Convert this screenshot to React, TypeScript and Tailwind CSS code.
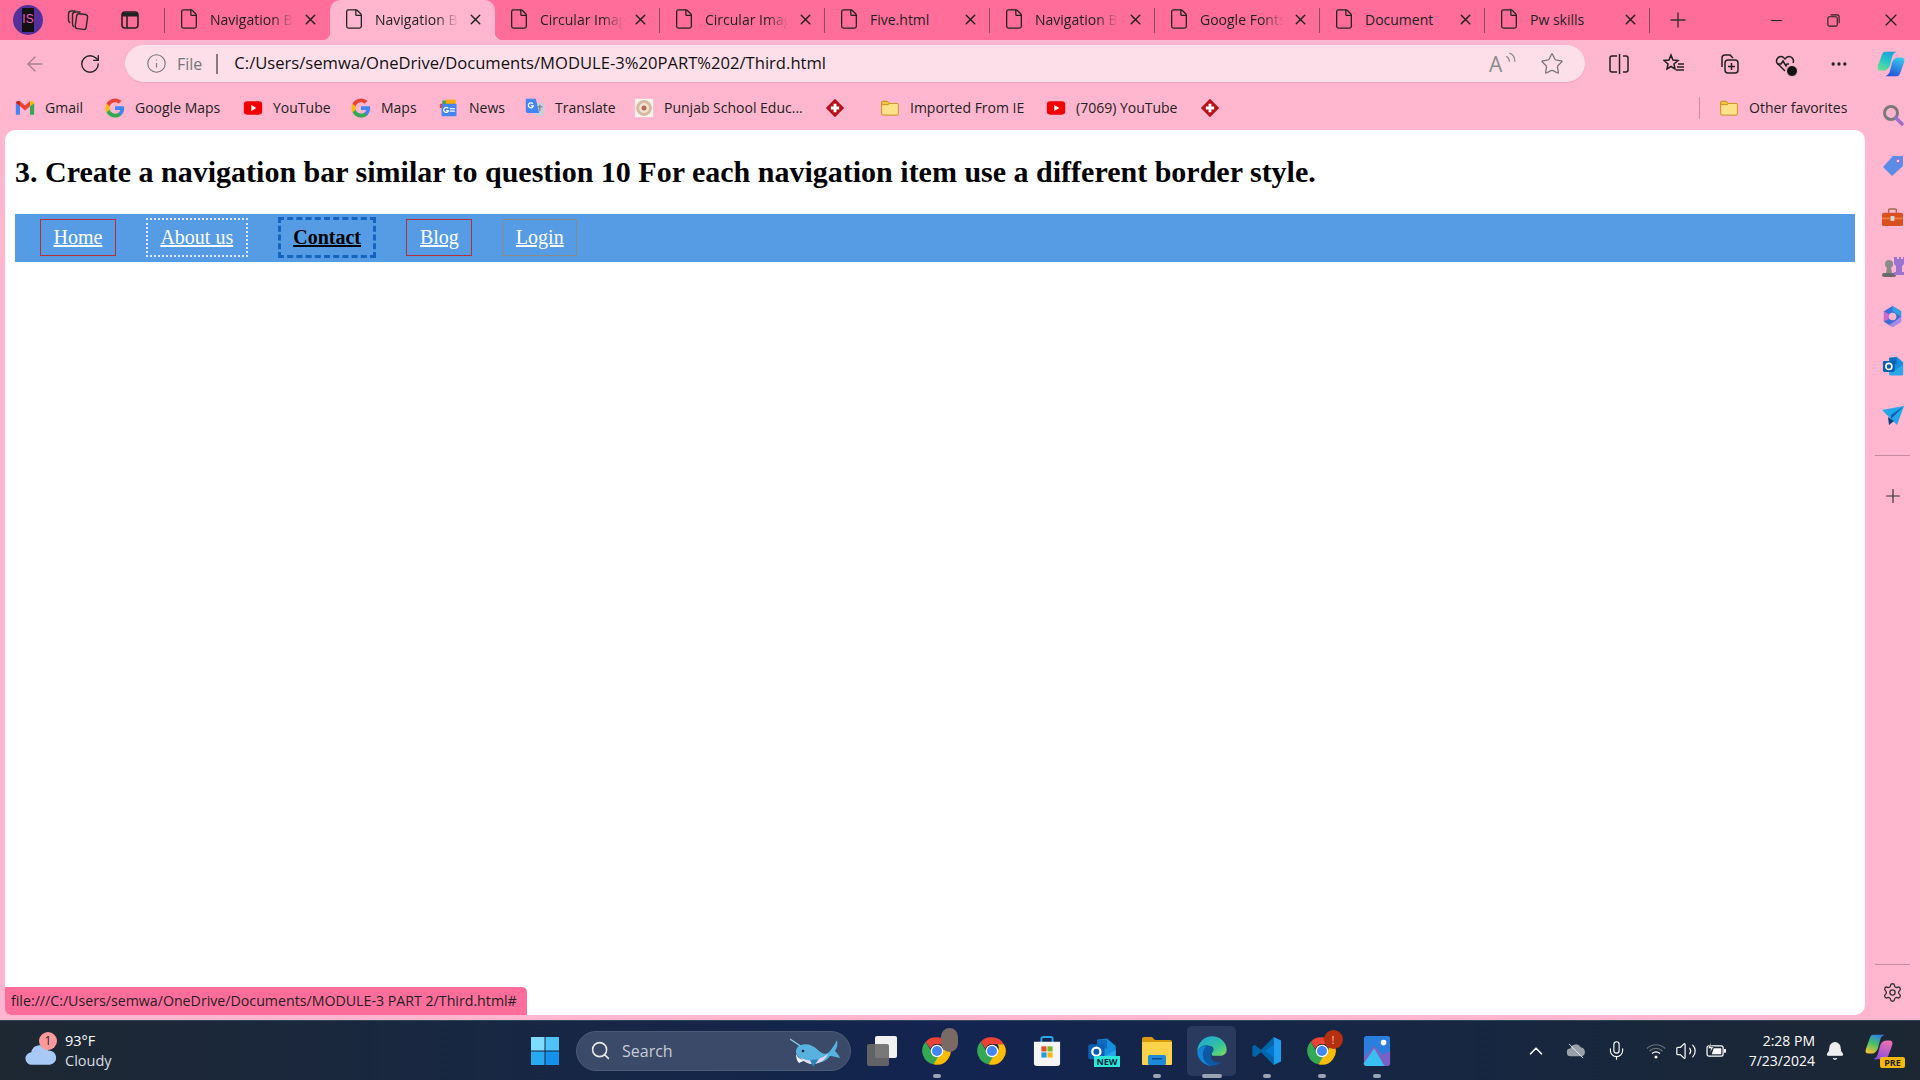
import {
  ArrowLeft,
  Bell,
  ChevronUp,
  Ellipsis,
  File,
  Info,
  Mic,
  Minus,
  Plus,
  RotateCw,
  Search,
  Settings,
  Star,
  Volume2,
  X,
} from "lucide-react";

const ui = "font-['Open_Sans','Noto_Sans',sans-serif]";

const tabs = [
  "Navigation Bar",
  "Navigation Bar",
  "Circular Image",
  "Circular Image",
  "Five.html",
  "Navigation Bar",
  "Google Fonts",
  "Document",
  "Pw skills",
];

const GoogleG = () => (
  <svg viewBox="0 0 24 24" className="w-5 h-5">
    <path fill="#4285F4" d="M23 12.3c0-.8-.1-1.6-.2-2.3H12v4.4h6.2c-.3 1.4-1.1 2.6-2.3 3.4v2.8h3.7c2.2-2 3.4-5 3.4-8.3z" />
    <path fill="#34A853" d="M12 23.5c3.1 0 5.700-1 7.600-2.800l-3.700-2.900c-1 .7-2.300 1.100-3.900 1.100-3 0-5.500-2-6.400-4.700H1.800v3C3.700 21 7.600 23.5 12 23.5z" />
    <path fill="#FBBC05" d="M5.600 14.200c-.5-1.400-.5-3 0-4.400v-3H1.800c-1.600 3.200-1.600 7.200 0 10.400l3.800-3z" />
    <path fill="#EA4335" d="M12 5.100c1.700 0 3.200.6 4.400 1.700l3.300-3.300C17.700 1.600 15.100.5 12 .5 7.600.5 3.700 3 1.800 6.800l3.800 3C6.500 7.100 9 5.100 12 5.100z" />
  </svg>
);

const Gmail = () => (
  <svg viewBox="0 0 24 24" className="w-5 h-5">
    <path fill="#4285F4" d="M1 6v14h5V10z" />
    <path fill="#34A853" d="M18 10v10h5V6z" />
    <path fill="#EA4335" d="M6 10V4l6 5 6-5v6l-6 5z" />
    <path fill="#C5221F" d="M1 6c0-2 2.5-3.200 5-2v6z" />
    <path fill="#FBBC05" d="M23 6c0-2-2.5-3.200-5-2v6z" />
  </svg>
);

const YouTube = () => (
  <svg viewBox="0 0 24 24" className="w-5 h-5">
    <rect x="1" y="4" width="22" height="16" rx="4" fill="#f00000" />
    <path d="M10 8.5l6 3.500-6 3.500z" fill="#fff" />
  </svg>
);

const News = () => (
  <svg viewBox="0 0 24 24" className="w-5 h-5">
    <path fill="#34A853" d="M4 3h12v6H4z" />
    <path fill="#F9AB00" d="M8 2h12v7H8z" />
    <path fill="#EA4335" d="M1 7h8v5H1z" />
    <rect x="3" y="7" width="18" height="15" rx="1.5" fill="#4285F4" />
    <rect x="13" y="12" width="6" height="1.5" fill="#fff" />
    <rect x="13" y="15" width="6" height="1.5" fill="#fff" />
    <path fill="none" stroke="#fff" strokeWidth="1.5" d="M11 12.500a3 3 0 1 0 .5 2.500H8.500" />
  </svg>
);

const Translate = () => (
  <svg viewBox="0 0 24 24" className="w-5 h-5">
    <path fill="#c9ced6" d="M10 6h13v15H12z" />
    <path fill="#7c8794" d="M14 10h7v1.500h-7zM17 8h1.500v8H17z" />
    <path fill="#4285F4" d="M1 1h12l4 17H3a2 2 0 0 1-2-2z" />
    <path fill="none" stroke="#fff" strokeWidth="1.5" d="M9.500 7a3 3 0 1 0 .5 2.500H7" />
  </svg>
);

const Crest = () => (
  <svg viewBox="0 0 24 24" className="w-5 h-5">
    <rect x="1" y="1" width="22" height="22" fill="#f7f3ee" />
    <circle cx="12" cy="12" r="9.5" fill="#d9b8a0" />
    <circle cx="12" cy="12" r="6" fill="#f1e3d4" />
    <circle cx="12" cy="12" r="3" fill="#b06a55" />
  </svg>
);

const RedDiamond = () => (
  <svg viewBox="0 0 24 24" className="w-5 h-5">
    <path d="M12 1l11 11-11 11L1 12z" fill="#b5121b" />
    <path d="M10.300 7h3.400v3.300H17v3.400h-3.300V17h-3.400v-3.300H7v-3.400h3.300z" fill="#fff" />
  </svg>
);

const FolderIcon = () => (
  <svg viewBox="0 0 24 24" className="w-5 h-5">
    <path d="M2 5.500A1.500 1.500 0 0 1 3.500 4h5l2.500 2.500h9.500A1.500 1.500 0 0 1 22 8v11a1.500 1.500 0 0 1-1.500 1.500h-17A1.500 1.500 0 0 1 2 19z" fill="#fde28a" stroke="#c7941e" strokeWidth="1.2" />
    <path d="M2 8h8l1-1.500L8.500 4h-5A1.500 1.500 0 0 0 2 5.500z" fill="#f4c542" stroke="#c7941e" strokeWidth="1.2" />
  </svg>
);

const Chrome = () => (
  <svg viewBox="0 0 48 48" className="w-[30px] h-[30px]">
    <path fill="#EA4335" d="M24 2a22 22 0 0 1 19 11H24a11 11 0 0 0-10.500 7.500L6 9A22 22 0 0 1 24 2z" />
    <path fill="#34A853" d="M6 9l9.500 16.500A11 11 0 0 0 27 34.500L18.500 45.300A22 22 0 0 1 6 9z" />
    <path fill="#FBBC05" d="M43 13a22 22 0 0 1-24.500 32.300L28 29a11 11 0 0 0 5-16z" />
    <circle cx="24" cy="24" r="10" fill="#fff" />
    <circle cx="24" cy="24" r="8" fill="#4285F4" />
  </svg>
);

const Edge = () => (
  <svg viewBox="0 0 48 48" className="w-[32px] h-[32px]">
    <defs>
      <linearGradient id="edgeTop" x1="0" y1="0" x2="1" y2="1">
        <stop offset="0" stopColor="#1aa4dc" />
        <stop offset="0.6" stopColor="#35c1a0" />
        <stop offset="1" stopColor="#7fe05a" />
      </linearGradient>
    </defs>
    <path fill="url(#edgeTop)" d="M24 2c12 0 22 9 22 20 0 6-5 9-10 9H25c-2-1-2-4 0-6 3-3 1-9-6-9C10 16 4 21 2 25 2 12 12 2 24 2z" />
    <path fill="#0c59a4" d="M2 25c3-7 10-11 17-9 6 1 8 6 6 9-5 5-3 13 5 16 3 1 7 1 9 0-4 3-9 5-15 5C12 46 2 36 2 25z" />
    <path fill="#1583d8" d="M2 25c3-6 9-9 14-8-6 5-7 13-4 20 2 4 6 8 12 9C12 46 2 36 2 25z" />
  </svg>
);

const VSCode = () => (
  <svg viewBox="0 0 24 24" className="w-[32px] h-[32px]">
    <path fill="#0065a9" d="M17 1.500L7.500 11 3 7.500 1 8.500v7l2 1L7.500 13l9.500 9.500z" />
    <path fill="#1f9cf0" d="M17 1.500l5.500 2.700v15.600L17 22.500z" />
    <path fill="#0078d4" d="M17 7.500L10.500 12l6.500 4.500z" />
  </svg>
);

const Whale = () => (
  <svg viewBox="0 0 50 29" className="w-[50px] h-[29px]">
    <path d="M0 1l12 8" stroke="#8fd0ee" strokeWidth="1.2" />
    <path fill="#58b2e0" d="M9 8c6-3 13-2 19 4 4 4 8 5 11 2 2-2 5-6 8-12 1 4 0 8-2 11 2 2 4 4 5 7-4-1-7-2-10-2-4 6-12 8-19 7-7-1-13-5-15-10-.5-3 1-6 3-7z" />
    <path fill="#e2d8f4" d="M11 20c8 4 18 3 27-4-3 7-11 11-18 10-4-1-7-3-9-6z" />
    <path fill="#f2f6fa" d="M6 16c2 4 5 6 9 6l-6 3c-2-2-3-5-3-9z" />
    <path fill="#2a86b8" d="M20 22l3 7 6-8z" />
    <circle cx="13" cy="13" r="1.3" fill="#10203a" />
  </svg>
);

const Store = () => (
  <svg viewBox="0 0 30 34" className="w-[28px] h-[32px]">
    <path d="M9 8V4a2 2 0 0 1 2-2h8a2 2 0 0 1 2 2v4" fill="none" stroke="#2ba4e8" strokeWidth="2" />
    <path d="M1 7h28v23a3 3 0 0 1-3 3H4a3 3 0 0 1-3-3z" fill="#f5f5f5" />
    <rect x="9" y="12" width="5.5" height="5.5" fill="#e8502a" />
    <rect x="15.5" y="12" width="5.5" height="5.5" fill="#78b82a" />
    <rect x="9" y="18.5" width="5.5" height="5.5" fill="#1f9ce8" />
    <rect x="15.5" y="18.5" width="5.5" height="5.5" fill="#f7b512" />
  </svg>
);

const Outlook = ({ small }: { small?: boolean }) => (
  <svg viewBox="0 0 24 24" className={small ? "w-[22px] h-[22px]" : "w-[30px] h-[30px]"}>
    <path fill="#1490df" d="M8 3l8-1 7 6v13a1 1 0 0 1-1 1H9a1 1 0 0 1-1-1z" />
    <path fill="#28a8ea" d="M8 12l7 4 8-5v10a1 1 0 0 1-1 1H9a1 1 0 0 1-1-1z" />
    <path fill="#0f6cbd" d="M8 3h8v7H8z" />
    <rect x="1" y="6.5" width="13" height="12" rx="1.5" fill="#0a5fb4" />
    <circle cx="7.5" cy="12.5" r="3.3" fill="none" stroke="#fff" strokeWidth="1.8" />
  </svg>
);

const Photos = () => (
  <svg viewBox="0 0 30 34" className="w-[28px] h-[32px]">
    <rect x="1" y="1" width="28" height="32" rx="3" fill="#2b7fdc" />
    <path d="M1 24L12 11l9 10 8-4v13a3 3 0 0 1-3 3H4a3 3 0 0 1-3-3z" fill="#7a5fc4" />
    <path d="M1 30L12 14l11 19H4a3 3 0 0 1-3-3z" fill="#39c0ee" />
    <circle cx="22" cy="8" r="3" fill="#fff" />
  </svg>
);

const WindowsLogo = () => (
  <svg viewBox="0 0 30 30" className="w-[30px] h-[30px]">
    <path fill="#7fdcff" d="M1 1h13.500v13.500H1z" />
    <path fill="#4fc3f7" d="M15.500 1H29v13.500H15.500z" />
    <path fill="#29a9f0" d="M1 15.500h13.500V29H1z" />
    <path fill="#1492ea" d="M15.500 15.500H29V29H15.500z" />
  </svg>
);

const CopilotMark = ({ pre }: { pre?: boolean }) => (
  <svg viewBox="0 0 32 32" className="w-[30px] h-[30px]">
    <defs>
      <linearGradient id={pre ? "cpL" : "cdL"} x1="0.7" y1="0" x2="0.3" y2="1">
        <stop offset="0" stopColor={pre ? "#2f7fe8" : "#1c9fe0"} />
        <stop offset="0.5" stopColor={pre ? "#46c06a" : "#27c4c8"} />
        <stop offset="1" stopColor={pre ? "#f2c230" : "#5fe08c"} />
      </linearGradient>
      <linearGradient id={pre ? "cpR" : "cdR"} x1="0.7" y1="0" x2="0.3" y2="1">
        <stop offset="0" stopColor={pre ? "#f070b0" : "#35c8f0"} />
        <stop offset="1" stopColor={pre ? "#8a4ee0" : "#2450d8"} />
      </linearGradient>
    </defs>
    <path fill={`url(#${pre ? "cpR" : "cdR"})`} d="M22 29H10c3-1 4-3 5-6l2-8c1-3 3-6 7-6h3c3 0 4 2 3 5l-4 11c-1 3-2 4-4 4z" />
    <path fill={`url(#${pre ? "cpL" : "cdL"})`} d="M10 3h12c-3 1-4 3-5 6l-2 8c-1 3-3 6-7 6H5c-3 0-4-2-3-5L6 7c1-3 2-4 4-4z" />
  </svg>
);

const bookmarks = [
  { icon: <Gmail />, label: "Gmail", w: "w-[90px]" },
  { icon: <GoogleG />, label: "Google Maps", w: "w-[138px]" },
  { icon: <YouTube />, label: "YouTube", w: "w-[108px]" },
  { icon: <GoogleG />, label: "Maps", w: "w-[88px]" },
  { icon: <News />, label: "News", w: "w-[86px]" },
  { icon: <Translate />, label: "Translate", w: "w-[109px]" },
  { icon: <Crest />, label: "Punjab School Educ...", w: "w-[191px]" },
  { icon: <RedDiamond />, label: "", w: "w-[55px]" },
  { icon: <FolderIcon />, label: "Imported From IE", w: "w-[166px]" },
  { icon: <YouTube />, label: "(7069) YouTube", w: "w-[154px]" },
  { icon: <RedDiamond />, label: "", w: "w-[40px]" },
];

const navItems = [
  { label: "Home", box: "border border-[#b3303c] mr-[30px]", text: "text-white" },
  { label: "About us", box: "border-2 border-dotted border-[#dfe6ee] mr-[30px]", text: "text-white" },
  { label: "Contact", box: "border-[3px] border-dashed border-[#1565c0] mr-[30px] font-bold", text: "text-black" },
  { label: "Blog", box: "border border-[#b3303c] mr-[30px]", text: "text-white" },
  { label: "Login", box: "border border-[#8a8a8a]", text: "text-white" },
];

const TitleBar = () => (
  <div className="h-10 flex items-center bg-[#ff6e9b] text-[#222]">
    <div className="w-[56px] flex justify-center">
      <div className="w-[30px] h-[30px] rounded-full bg-[#55309a] flex items-center justify-center">
        <div className="w-[12px] h-[24px] bg-[#111] text-[#f05ad0] text-[12px] leading-[22px] text-center font-['Liberation_Sans',sans-serif]">
          IS
        </div>
      </div>
    </div>
    <div className="w-[44px] flex justify-center">
      <svg viewBox="0 0 24 24" className="w-[24px] h-[24px]" fill="none" stroke="#2a2a2a" strokeWidth="1.4">
        <rect x="10" y="6" width="11" height="15" rx="2.5" transform="rotate(8 15 13)" />
        <path d="M8 19c-1-1-1.500-2-1.500-3V7c0-2 1-3 3-3h5" />
        <path d="M4 15c-1-1-1.500-2-1.500-3V6c0-2 1-3 3-3h4" />
      </svg>
    </div>
    <div className="w-[60px] flex justify-center">
      <svg viewBox="0 0 18 18" className="w-[18px] h-[18px]" fill="none" stroke="#222" strokeWidth="1.6">
        <rect x="1" y="1" width="16" height="16" rx="3" />
        <path d="M1 3.500h16" strokeWidth="4" />
        <path d="M6 5v12" />
      </svg>
    </div>
    <div className="w-[5px] h-[25px] border-r border-[#8a4a60]" />
    {tabs.map((title, i) => (
      <div
        key={i}
        className={
          "w-[165px] h-10 flex items-center pl-[13px] pb-[2px] shrink-0 relative " +
          (i === 1 ? "bg-[#ffb6ce] rounded-t-[10px]" : "")
        }
      >
        {i === 1 && (
          <>
            <div className="absolute -left-2 bottom-0 w-2 h-2 bg-[radial-gradient(circle_at_0_0,transparent_8px,#ffb6ce_8.5px)]" />
            <div className="absolute -right-2 bottom-0 w-2 h-2 bg-[radial-gradient(circle_at_100%_0,transparent_8px,#ffb6ce_8.5px)]" />
          </>
        )}
        <File className="w-[22px] h-[22px] text-[#222]" strokeWidth={1.4} />
        <div
          className={
            `${ui} ml-[10px] w-[88px] text-[14px] overflow-hidden whitespace-nowrap ` +
            (title.length > 10 ? "[mask-image:linear-gradient(to_right,black_70%,transparent_95%)]" : "")
          }
        >
          {title}
        </div>
        <X className="ml-[4px] w-[17px] h-[17px] text-[#222]" strokeWidth={2} />
        {i !== 0 && i !== 1 && <div className="absolute right-0 top-2 h-[25px] border-r border-[#8a4a60]" />}
      </div>
    ))}
    <div className="w-[55px] flex justify-center">
      <Plus className="w-[24px] h-[24px] text-[#333]" strokeWidth={1.4} />
    </div>
    <div className="ml-auto flex items-center">
      <div className="w-[57px] flex justify-center">
        <Minus className="w-[17px] h-[17px] text-[#222]" strokeWidth={1.5} />
      </div>
      <div className="w-[57px] flex justify-center">
        <svg viewBox="0 0 16 16" className="w-[15px] h-[15px]" fill="none" stroke="#222" strokeWidth="1.2">
          <rect x="2" y="4" width="10" height="10" rx="1.5" />
          <path d="M5 2h7a2 2 0 0 1 2 2v7" />
        </svg>
      </div>
      <div className="w-[58px] flex justify-center">
        <X className="w-[20px] h-[20px] text-[#222]" strokeWidth={1.5} />
      </div>
    </div>
  </div>
);

const ToolBar = () => (
  <div className="h-12 flex items-center bg-[#ffb6ce] pb-[1px] text-[#222]">
    <div className="w-[70px] flex justify-center">
      <ArrowLeft className="w-[24px] h-[24px] text-[#a87f8f]" strokeWidth={1.4} />
    </div>
    <div className="w-[40px] flex justify-center">
      <RotateCw className="w-[22px] h-[22px] text-[#222]" strokeWidth={1.5} />
    </div>
    <div className="ml-[15px] w-[1460px] h-[37px] rounded-full bg-[#fddfe9] flex items-center shadow-[0_1px_1px_rgba(160,60,100,0.15)]">
      <Info className="ml-[21px] w-[21px] h-[21px] text-[#777]" strokeWidth={1.3} />
      <span className={`${ui} ml-[10px] text-[16px] text-[#777]`}>File</span>
      <div className="ml-[14px] h-[20px] border-r-2 border-[#8a7a80]" />
      <span className={`${ui} ml-[16px] text-[16.6px] text-[#111] whitespace-nowrap`}>
        C:/Users/semwa/OneDrive/Documents/MODULE-3%20PART%202/Third.html
      </span>
      <div className="ml-auto flex items-center mr-[21px]">
        <div className="relative w-[24px] h-[24px] mr-[27px] text-[#8b8b8b]">
          <span className={`${ui} absolute left-0 top-[-1px] text-[21px] leading-[26px]`}>A</span>
          <svg viewBox="0 0 10 12" className="absolute right-[-3px] top-0 w-[11px] h-[13px]" fill="none" stroke="#8b8b8b" strokeWidth="1.2">
            <path d="M1 4c2 1 3 3 3 5M4 1c3 1 5 4 5 8" />
          </svg>
        </div>
        <Star className="w-[24px] h-[24px] text-[#777]" strokeWidth={1.3} />
      </div>
    </div>
    <div className="ml-[15px] w-[38px] flex justify-center">
      <svg viewBox="0 0 22 22" className="w-[22px] h-[22px]" fill="none" stroke="#222" strokeWidth="1.5">
        <path d="M9 3H4a2 2 0 0 0-2 2v12a2 2 0 0 0 2 2h5M15 3h3a2 2 0 0 1 2 2v12a2 2 0 0 1-2 2h-3M11.500 1v20" />
      </svg>
    </div>
    <div className="ml-[17px] w-[38px] flex justify-center">
      <svg viewBox="0 0 22 22" className="w-[22px] h-[22px]" fill="none" stroke="#222" strokeWidth="1.5">
        <path d="M8 2l2 5 5 .5-4 3.500 1 5-4-2.500L4 16l1-5-4-3.500L6 7z" />
        <path d="M15 11h6M14 14h7M13 17h8" />
      </svg>
    </div>
    <div className="ml-[17px] w-[38px] flex justify-center">
      <svg viewBox="0 0 22 22" className="w-[22px] h-[22px]" fill="none" stroke="#222" strokeWidth="1.5">
        <path d="M4 14V5a3 3 0 0 1 3-3h5l3 3" />
        <rect x="7" y="7" width="13" height="13" rx="3" />
        <path d="M13.500 10v7M10 13.500h7" />
      </svg>
    </div>
    <div className="ml-[18px] w-[38px] flex justify-center relative">
      <svg viewBox="0 0 22 22" className="w-[22px] h-[22px]" fill="none" stroke="#222" strokeWidth="1.5">
        <path d="M11 18L3 10a4.500 4.500 0 0 1 6-6l2 2 2-2a4.500 4.500 0 0 1 6 6" />
        <path d="M3 11h4l2-3 3 5 1-2h2" />
      </svg>
      <div className="absolute right-[6px] bottom-[-2px] w-[12px] h-[12px] rounded-full bg-[#111] border border-[#ffb6ce]" />
    </div>
    <div className="ml-[16px] w-[38px] flex justify-center">
      <Ellipsis className="w-[20px] h-[20px] text-[#222]" />
    </div>
    <div className="ml-[14px] w-[38px] flex justify-center">
      <CopilotMark />
    </div>
  </div>
);

const BookmarkBar = () => (
  <div className={`${ui} h-[42px] flex items-center bg-[#ffb6ce] pl-[15px] pb-[3px] text-[14px] text-[#222]`}>
    {bookmarks.map((b, i) => (
      <div key={i} className={`${b.w} flex items-center gap-[10px] whitespace-nowrap`}>
        {b.icon}
        {b.label && <span>{b.label}</span>}
      </div>
    ))}
    <div className="ml-auto h-[22px] border-r border-[#d48aa4]" />
    <div className="ml-[19px] w-[201px] flex items-center gap-[10px]">
      <FolderIcon />
      <span>Other favorites</span>
    </div>
  </div>
);

const SideRail = () => (
  <div className="w-[55px] flex flex-col items-center pb-[8px]">
    <div className="h-[30px] flex items-center -mt-[30px]">
      <svg viewBox="0 0 22 22" className="w-[22px] h-[22px]" fill="none">
        <circle cx="9" cy="9" r="6.5" stroke="#7a7a7a" strokeWidth="3" />
        <path d="M14 14l6 6" stroke="#9a6fd0" strokeWidth="3.5" strokeLinecap="round" />
      </svg>
    </div>
    <div className="mt-[21px] h-[30px] flex items-center">
      <svg viewBox="0 0 22 22" className="w-[22px] h-[22px]">
        <path d="M11 1h9a1 1 0 0 1 1 1v9L10 21 1 12z" fill="#5b8de6" />
        <circle cx="16" cy="6" r="2" fill="#e6d7f7" stroke="#8a5fc8" />
      </svg>
    </div>
    <div className="mt-[21px] h-[30px] flex items-center">
      <svg viewBox="0 0 24 22" className="w-[23px] h-[21px]">
        <path d="M8 6V3a1 1 0 0 1 1-1h6a1 1 0 0 1 1 1v3" fill="none" stroke="#a06a50" strokeWidth="1.5" />
        <rect x="1" y="6" width="22" height="14" rx="2" fill="#d8501f" />
        <rect x="1" y="11" width="22" height="2" fill="#f07a3a" />
        <rect x="10" y="9.5" width="4" height="5" fill="#d8d8d8" />
      </svg>
    </div>
    <div className="mt-[20px] h-[30px] flex items-center">
      <svg viewBox="0 0 24 24" className="w-[24px] h-[24px]">
        <circle cx="8" cy="9" r="4" fill="#8a8a8a" />
        <path d="M6 12h4l1 6H5z" fill="#8a8a8a" />
        <rect x="1" y="18" width="14" height="4" rx="2" fill="#6a6a6a" />
        <path d="M14 2h2v2h2V2h2v2h2V2h1v7l-2 2v6h2v3H13v-3h2v-6l-2-2V2z" fill="#9a74d0" />
      </svg>
    </div>
    <div className="mt-[19px] h-[30px] flex items-center">
      <svg viewBox="0 0 24 24" className="w-[23px] h-[23px]">
        <path d="M12 1l9 5.500v11L12 23l-9-5.500v-11z" fill="#3a6fd8" />
        <path d="M12 1l9 5.500V12l-5-3-4-3z" fill="#2fa3e0" />
        <path d="M3 6.500l5 3v5l-5 3z" fill="#c76ad4" />
        <path d="M21 12v5.500L12 23l-4-2 8-5z" fill="#a88ae8" />
        <circle cx="12" cy="12" r="4" fill="#ffb6ce" />
      </svg>
    </div>
    <div className="mt-[20px] h-[30px] flex items-center">
      <Outlook small />
    </div>
    <div className="mt-[20px] h-[30px] flex items-center">
      <svg viewBox="0 0 24 20" className="w-[24px] h-[20px]">
        <path d="M1 4l22-4-7 19-6-6z" fill="#20a8ea" />
        <path d="M10 13l13-13-13 9z" fill="#0d5fb0" />
        <path d="M7 11l1 8 5-4z" fill="#0b3e80" />
      </svg>
    </div>
    <div className="mt-[24px] w-[35px] border-t border-[#c48aa0]" />
    <div className="mt-[25px] h-[30px] flex items-center">
      <Plus className="w-[22px] h-[22px] text-[#333]" strokeWidth={1.3} />
    </div>
    <div className="mt-auto w-[35px] border-t border-[#c48aa0]" />
    <div className="mt-[12px] h-[30px] flex items-center">
      <Settings className="w-[21px] h-[21px] text-[#333]" strokeWidth={1.5} />
    </div>
  </div>
);

const Page = () => (
  <div className="relative flex-1 bg-white rounded-t-[10px] rounded-br-[10px] rounded-bl-[6px] px-[10px] font-['Liberation_Serif',serif] text-black overflow-hidden">
    <h2 className="mt-[24px] text-[30px] leading-[36px] font-bold whitespace-nowrap">
      3. Create a navigation bar similar to question 10 For each navigation item use a different border style.
    </h2>
    <ul className="mt-[24px] h-[48px] bg-[#559ce5] flex items-center pl-[25px] pb-[2px] text-[20px]">
      {navItems.map((n) => (
        <li key={n.label} className={`${n.box} px-[12.5px] py-[6px] leading-[23px]`}>
          <a href="#" className={`${n.text} underline`}>
            {n.label}
          </a>
        </li>
      ))}
    </ul>
    <div className={`${ui} absolute left-0 bottom-0 h-[28px] w-[522px] bg-[#ff6e9b] rounded-tr-[5px] pl-[6px] text-[14.2px] leading-[28px] text-[#222] whitespace-nowrap`}>
      file:///C:/Users/semwa/OneDrive/Documents/MODULE-3 PART 2/Third.html#
    </div>
  </div>
);

const TaskIcon = ({ children, dot, wide }: { children: React.ReactNode; dot?: boolean; wide?: boolean }) => (
  <div className="relative w-[55px] h-[60px] flex items-center justify-center">
    {wide && <div className="absolute left-[3px] top-[5px] w-[49px] h-[50px] rounded-[5px] bg-[#2a3a5e]" />}
    <div className="relative flex items-center justify-center">{children}</div>
    {dot && <div className={"absolute bottom-[3px] h-[4px] rounded-full bg-[#9aa3b2] " + (wide ? "w-[20px]" : "w-[8px]")} />}
  </div>
);

const TaskBar = () => (
  <div className={`${ui} h-[60px] flex items-center border-t border-[#3a4452] bg-gradient-to-r from-[#1e2833] via-[#122450] to-[#1c2733] text-white`}>
    <div className="w-[517px] flex items-center pl-[25px]">
      <div className="relative w-[36px] h-[30px]">
        <svg viewBox="0 0 36 24" className="absolute left-0 bottom-0 w-[32px] h-[22px]">
          <path d="M8 23a7 7 0 0 1-1-14 10 10 0 0 1 19-2 8 8 0 0 1 2 16z" fill="#a8c8f5" />
        </svg>
        <div className="absolute left-[14px] top-[-4px] w-[18px] h-[18px] rounded-full bg-[#ff9a9a] text-[#222] text-[12px] leading-[18px] text-center">
          1
        </div>
      </div>
      <div className="ml-[4px] text-[14.5px] leading-[20px]">
        <div>93°F</div>
        <div className="text-[#d8dde2]">Cloudy</div>
      </div>
    </div>
    <TaskIcon>
      <WindowsLogo />
    </TaskIcon>
    <div className="relative ml-[4px] w-[275px] h-[40px] rounded-full bg-[#3a4a68] border border-[#4b5b78] flex items-center pl-[13px]">
      <Search className="w-[21px] h-[21px] text-[#e8e8e8]" strokeWidth={1.8} />
      <span className="ml-[11px] text-[16px] text-[#c8ccd6]">Search</span>
      <div className="absolute right-[10px] top-[6px]">
        <Whale />
      </div>
    </div>
    <div className="ml-[3px] flex items-center">
      <TaskIcon>
        <div className="relative w-[30px] h-[30px]">
          <div className="absolute right-0 top-0 w-[22px] h-[22px] rounded-[2px] bg-[#f1f1f1]" />
          <div className="absolute left-0 bottom-0 w-[22px] h-[22px] rounded-[2px] bg-[#6a6a6a] opacity-90" />
        </div>
      </TaskIcon>
      <TaskIcon dot>
        <Chrome />
        <div className="absolute -right-[6px] -top-[8px] w-[17px] h-[24px] rounded-full bg-[#7a6a66]" />
      </TaskIcon>
      <TaskIcon>
        <Chrome />
      </TaskIcon>
      <TaskIcon>
        <Store />
      </TaskIcon>
      <TaskIcon>
        <Outlook />
        <div className="absolute -right-[3px] bottom-[-1px] h-[11px] px-[2px] bg-[#2ee6d6] text-[#0a2a40] text-[9px] leading-[11px] font-bold">
          NEW
        </div>
      </TaskIcon>
      <TaskIcon dot>
        <svg viewBox="0 0 30 30" className="w-[30px] h-[30px]">
          <path d="M0 3a2 2 0 0 1 2-2h8l3 3h15a2 2 0 0 1 2 2v3H0z" fill="#d99a0c" />
          <path d="M0 6h30v22a1 1 0 0 1-1 1H1a1 1 0 0 1-1-1z" fill="#fbd34a" />
          <rect x="6" y="19" width="18" height="10" rx="1.5" fill="#1b8ad8" />
          <rect x="10" y="22" width="10" height="1.5" fill="#0b4f8a" />
        </svg>
      </TaskIcon>
      <TaskIcon dot wide>
        <Edge />
      </TaskIcon>
      <TaskIcon dot>
        <VSCode />
      </TaskIcon>
      <TaskIcon dot>
        <Chrome />
        <div className="absolute -right-[6px] -top-[6px] w-[19px] h-[19px] rounded-full bg-[#b5300f] text-[11px] leading-[19px] text-center text-[#f5c0b0]">
          !
        </div>
      </TaskIcon>
      <TaskIcon dot>
        <Photos />
      </TaskIcon>
    </div>
    <div className="ml-auto flex items-center">
      <div className="w-[40px] flex justify-center">
        <ChevronUp className="w-[22px] h-[22px]" strokeWidth={1.8} />
      </div>
      <div className="w-[40px] flex justify-center">
        <svg viewBox="0 0 22 18" className="w-[21px] h-[17px]">
          <path d="M5 15a4 4 0 0 1-.5-8 6 6 0 0 1 11-1.500A5 5 0 0 1 17 15z" fill="#9aa0a8" />
          <path d="M3 2l15 15" stroke="#e8e8e8" strokeWidth="1" />
        </svg>
      </div>
      <div className="w-[40px] flex justify-center">
        <Mic className="w-[21px] h-[21px]" strokeWidth={1.3} />
      </div>
      <div className="ml-[5px] w-[30px] flex justify-center">
        <svg viewBox="0 0 20 16" className="w-[20px] h-[16px]" fill="none">
          <path d="M1 5.500c5-5 13-5 18 0M3.500 8c3.500-3.500 9.500-3.500 13 0" stroke="#6a727c" strokeWidth="1.2" />
          <path d="M6 10.500c2.500-2 5.500-2 8 0" stroke="#fff" strokeWidth="1.4" />
          <circle cx="10" cy="14" r="1.5" fill="#fff" />
        </svg>
      </div>
      <div className="w-[30px] flex justify-center">
        <Volume2 className="w-[22px] h-[22px]" strokeWidth={1.3} />
      </div>
      <div className="w-[30px] flex justify-center">
        <svg viewBox="0 0 22 18" className="w-[21px] h-[17px]" fill="none" stroke="#fff" strokeWidth="1.3">
          <rect x="1" y="4" width="17" height="11" rx="2" />
          <path d="M20 7.500v4" strokeWidth="2" />
          <path d="M8 6.500h8v6.500H6z" fill="#fff" stroke="none" />
          <path d="M5 0L2 7h3l-1 5 4-7H5z" fill="#fff" stroke="#1c2733" strokeWidth="0.6" />
        </svg>
      </div>
      <div className="w-[84px] text-right text-[14px] leading-[20px]">
        <div>2:28 PM</div>
        <div>7/23/2024</div>
      </div>
      <div className="w-[40px] flex justify-center">
        <Bell className="w-[20px] h-[20px] text-[#eee]" fill="#eee" strokeWidth={1.5} />
      </div>
      <div className="w-[48px] relative flex justify-center mr-[17px]">
        <div className="-mt-[8px]">
          <CopilotMark pre />
        </div>
        <div className="absolute bottom-[-6px] right-[-2px] w-[25px] h-[11px] rounded-[2px] bg-[#f5b70a] text-[#222] text-[9px] leading-[11px] text-center font-bold">
          PRE
        </div>
      </div>
    </div>
  </div>
);

export default function App() {
  return (
    <div className="w-[1920px] h-[1080px] flex flex-col overflow-hidden bg-[#ffb6ce]">
      <TitleBar />
      <ToolBar />
      <BookmarkBar />
      <div className="flex-1 flex pl-[5px] pb-[5px] min-h-0">
        <Page />
        <SideRail />
      </div>
      <TaskBar />
    </div>
  );
}
